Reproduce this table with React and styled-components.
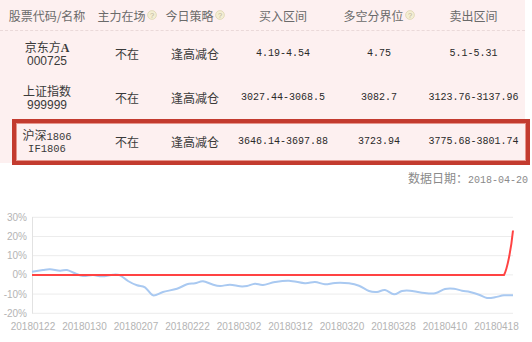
import styled, { createGlobalStyle } from "styled-components";

const GlobalStyle = createGlobalStyle`
  html, body {
    margin: 0;
    padding: 0;
    background: #fff;
  }
  body {
    width: 532px;
    height: 342px;
    overflow: hidden;
    font-family: "Noto Sans CJK SC", "Liberation Sans", sans-serif;
  }
`;

const columns = "94px 66px 70px 106px 86px 103px";

const rows = [
  { name: "京东方", tail: "A", code: "000725", zl: "不在", cl: "逢高减仓", buy: "4.19-4.54", mid: "4.75", sell: "5.1-5.31" },
  { name: "上证指数", tail: "", code: "999999", zl: "不在", cl: "逢高减仓", buy: "3027.44-3068.5", mid: "3082.7", sell: "3123.76-3137.96" },
  { name: "沪深", tail: "1806", code: "IF1806", zl: "不在", cl: "逢高减仓", buy: "3646.14-3697.88", mid: "3723.94", sell: "3775.68-3801.74", active: true, mono: true },
];

function Help() {
  return (
    <HelpIcon width="10" height="10" viewBox="0 0 10 10">
      <circle cx="5" cy="5" r="4.4" fill="#f4eed3" stroke="#ddd5b2" strokeWidth="0.8" />
      <text x="5" y="7.6" textAnchor="middle" fontSize="7.5" fill="#b9b39a" fontFamily="Liberation Sans, sans-serif">?</text>
    </HelpIcon>
  );
}

// 走势图数据（页面坐标）
const blue = [
  [32, 271.7], [43, 270], [50, 269.3], [60, 270.7], [67, 270], [75, 273.3], [83, 276],
  [93, 275], [102, 276.3], [113, 274.7], [120, 275.3], [128, 281], [137, 285.3],
  [145, 287.3], [153, 295.3], [163, 292], [177, 288.7], [187, 284.3], [195, 283.3],
  [203, 281.3], [212, 284.3], [220, 286], [230, 284.7], [240, 286.3], [247, 286],
  [255, 283.7], [263, 285], [275, 282], [289, 280.7], [305, 283.3], [315, 282],
  [325, 284.3], [335, 283], [349, 283.3], [359, 285.7], [369, 291], [377, 292],
  [385, 290], [394, 294.3], [402, 291], [410, 290.7], [422, 292.7], [435, 293.3],
  [445, 289], [454, 288.7], [462, 290.7], [470, 292], [479, 294.7], [487, 298],
  [495, 297.3], [504, 295.3], [513, 295.3],
];

function smooth(pts) {
  let d = `M${pts[0][0]},${pts[0][1]}`;
  for (let i = 0; i < pts.length - 1; i++) {
    const p0 = pts[i - 1] || pts[i];
    const p1 = pts[i];
    const p2 = pts[i + 1];
    const p3 = pts[i + 2] || p2;
    const c1x = p1[0] + (p2[0] - p0[0]) / 6;
    const c1y = p1[1] + (p2[1] - p0[1]) / 6;
    const c2x = p2[0] - (p3[0] - p1[0]) / 6;
    const c2y = p2[1] - (p3[1] - p1[1]) / 6;
    d += ` C${c1x.toFixed(1)},${c1y.toFixed(1)} ${c2x.toFixed(1)},${c2y.toFixed(1)} ${p2[0]},${p2[1]}`;
  }
  return d;
}

const yTicks = ["30%", "20%", "10%", "0%", "-10%", "-20%"];
const xTicks = ["20180122", "20180130", "20180207", "20180222", "20180302", "20180312", "20180320", "20180328", "20180410", "20180418"];

function Chart() {
  return (
    <ChartSvg width="532" height="152" viewBox="0 190 532 152">
      {yTicks.map((t, i) => {
        const y = 217.3 + i * 19.2;
        return (
          <g key={t}>
            <line x1="32" x2="513" y1={y} y2={y} stroke="#ececec" strokeWidth="1" />
            <text x="27" y={y + 3.5} textAnchor="end" fontSize="10" fill="#b4b4b4">{t}</text>
          </g>
        );
      })}
      <line x1="32.5" x2="32.5" y1="217" y2="313.5" stroke="#e2e2e2" strokeWidth="1" />
      {xTicks.map((t, i) => (
        <text key={t} x={33 + i * 51.5} y="329.5" textAnchor="middle" fontSize="10" fill="#b4b4b4">{t}</text>
      ))}
      <path d={smooth(blue)} fill="none" stroke="#a9c9f1" strokeWidth="2" strokeLinejoin="round" />
      <path d="M32,274.9 L504,274.9 C507,270 511,250 513,230.5" fill="none" stroke="#ff4343" strokeWidth="2" />
    </ChartSvg>
  );
}

export default function App() {
  return (
    <>
      <GlobalStyle />
      <Page>
        <Table>
          <HeadRow>
            <Th>股票代码/名称</Th>
            <Th>主力在场<Help /></Th>
            <Th>今日策略<Help /></Th>
            <Th>买入区间</Th>
            <Th>多空分界位<Help /></Th>
            <Th>卖出区间</Th>
          </HeadRow>
          {rows.map((r) => (
            <Row key={r.code} $active={r.active}>
              <NameCell>
                <Name>
                  {r.name}
                  {r.tail && <NameTail $mono={r.mono}>{r.tail}</NameTail>}
                </Name>
                <Code $mono={r.mono}>{r.code}</Code>
              </NameCell>
              <Td>{r.zl}</Td>
              <Td>{r.cl}</Td>
              <Num>{r.buy}</Num>
              <Num>{r.mid}</Num>
              <Num>{r.sell}</Num>
            </Row>
          ))}
        </Table>
        <DateLine>
          数据日期：<DateNum>2018-04-20</DateNum>
        </DateLine>
        <Chart />
      </Page>
    </>
  );
}

const Page = styled.div`
  width: 532px;
  height: 342px;
  display: flex;
  flex-direction: column;
`;

const Table = styled.div`
  width: 525px;
  background: #fdf0f0;
  display: flex;
  flex-direction: column;
`;

const HeadRow = styled.div`
  display: grid;
  grid-template-columns: ${columns};
  height: 30px;
  border-bottom: 1px dashed #ead9d9;
  align-items: center;
`;

const Th = styled.div`
  display: flex;
  align-items: center;
  justify-content: center;
  font-size: 12px;
  color: #6a6a6a;
  white-space: nowrap;
`;

const HelpIcon = styled.svg`
  display: block;
  margin-left: 1px;
`;

const Row = styled.div`
  position: relative;
  display: grid;
  grid-template-columns: ${columns};
  height: 44px;
  align-items: center;

  &::after {
    content: "";
    display: ${(p) => (p.$active ? "block" : "none")};
    position: absolute;
    left: 12px;
    right: -5px;
    top: 0;
    bottom: -2px;
    border: 4px solid #c33b2f;
    box-shadow: inset 0 0 0 1px #e6958c;
    pointer-events: none;
  }
`;

const Td = styled.div`
  text-align: center;
  font-size: 12px;
  color: #3a3a3a;
  white-space: nowrap;
`;

const NameCell = styled.div`
  display: flex;
  flex-direction: column;
  align-items: center;
  gap: 1px;
  color: #3a3a3a;
`;

const Name = styled.div`
  font-size: 12px;
  line-height: 14px;
  height: 14px;
  display: flex;
  align-items: baseline;
  white-space: nowrap;
`;

const NameTail = styled.span`
  font-family: ${(p) => (p.$mono ? `"Liberation Mono", monospace` : `"Liberation Serif", serif`)};
  font-size: ${(p) => (p.$mono ? "10.5px" : "12px")};
  font-weight: ${(p) => (p.$mono ? "normal" : "bold")};
`;

const Code = styled.div`
  font-size: ${(p) => (p.$mono ? "10.5px" : "12px")};
  line-height: 12px;
  font-family: ${(p) => (p.$mono ? `"Liberation Mono", monospace` : `"Liberation Sans", sans-serif`)};
`;

const Num = styled.div`
  text-align: center;
  font-size: 10px;
  color: #2a2a2a;
  font-family: "Liberation Mono", monospace;
  white-space: nowrap;
`;

const DateLine = styled.div`
  width: 528px;
  height: 27px;
  box-sizing: border-box;
  padding-top: 8px;
  line-height: 14px;
  text-align: right;
  font-size: 12px;
  color: #8a8a8a;
`;

const DateNum = styled.span`
  font-family: "Liberation Mono", monospace;
  font-size: 10px;
`;

const ChartSvg = styled.svg`
  display: block;
  font-family: "Liberation Sans", "Noto Sans", sans-serif;
`;
